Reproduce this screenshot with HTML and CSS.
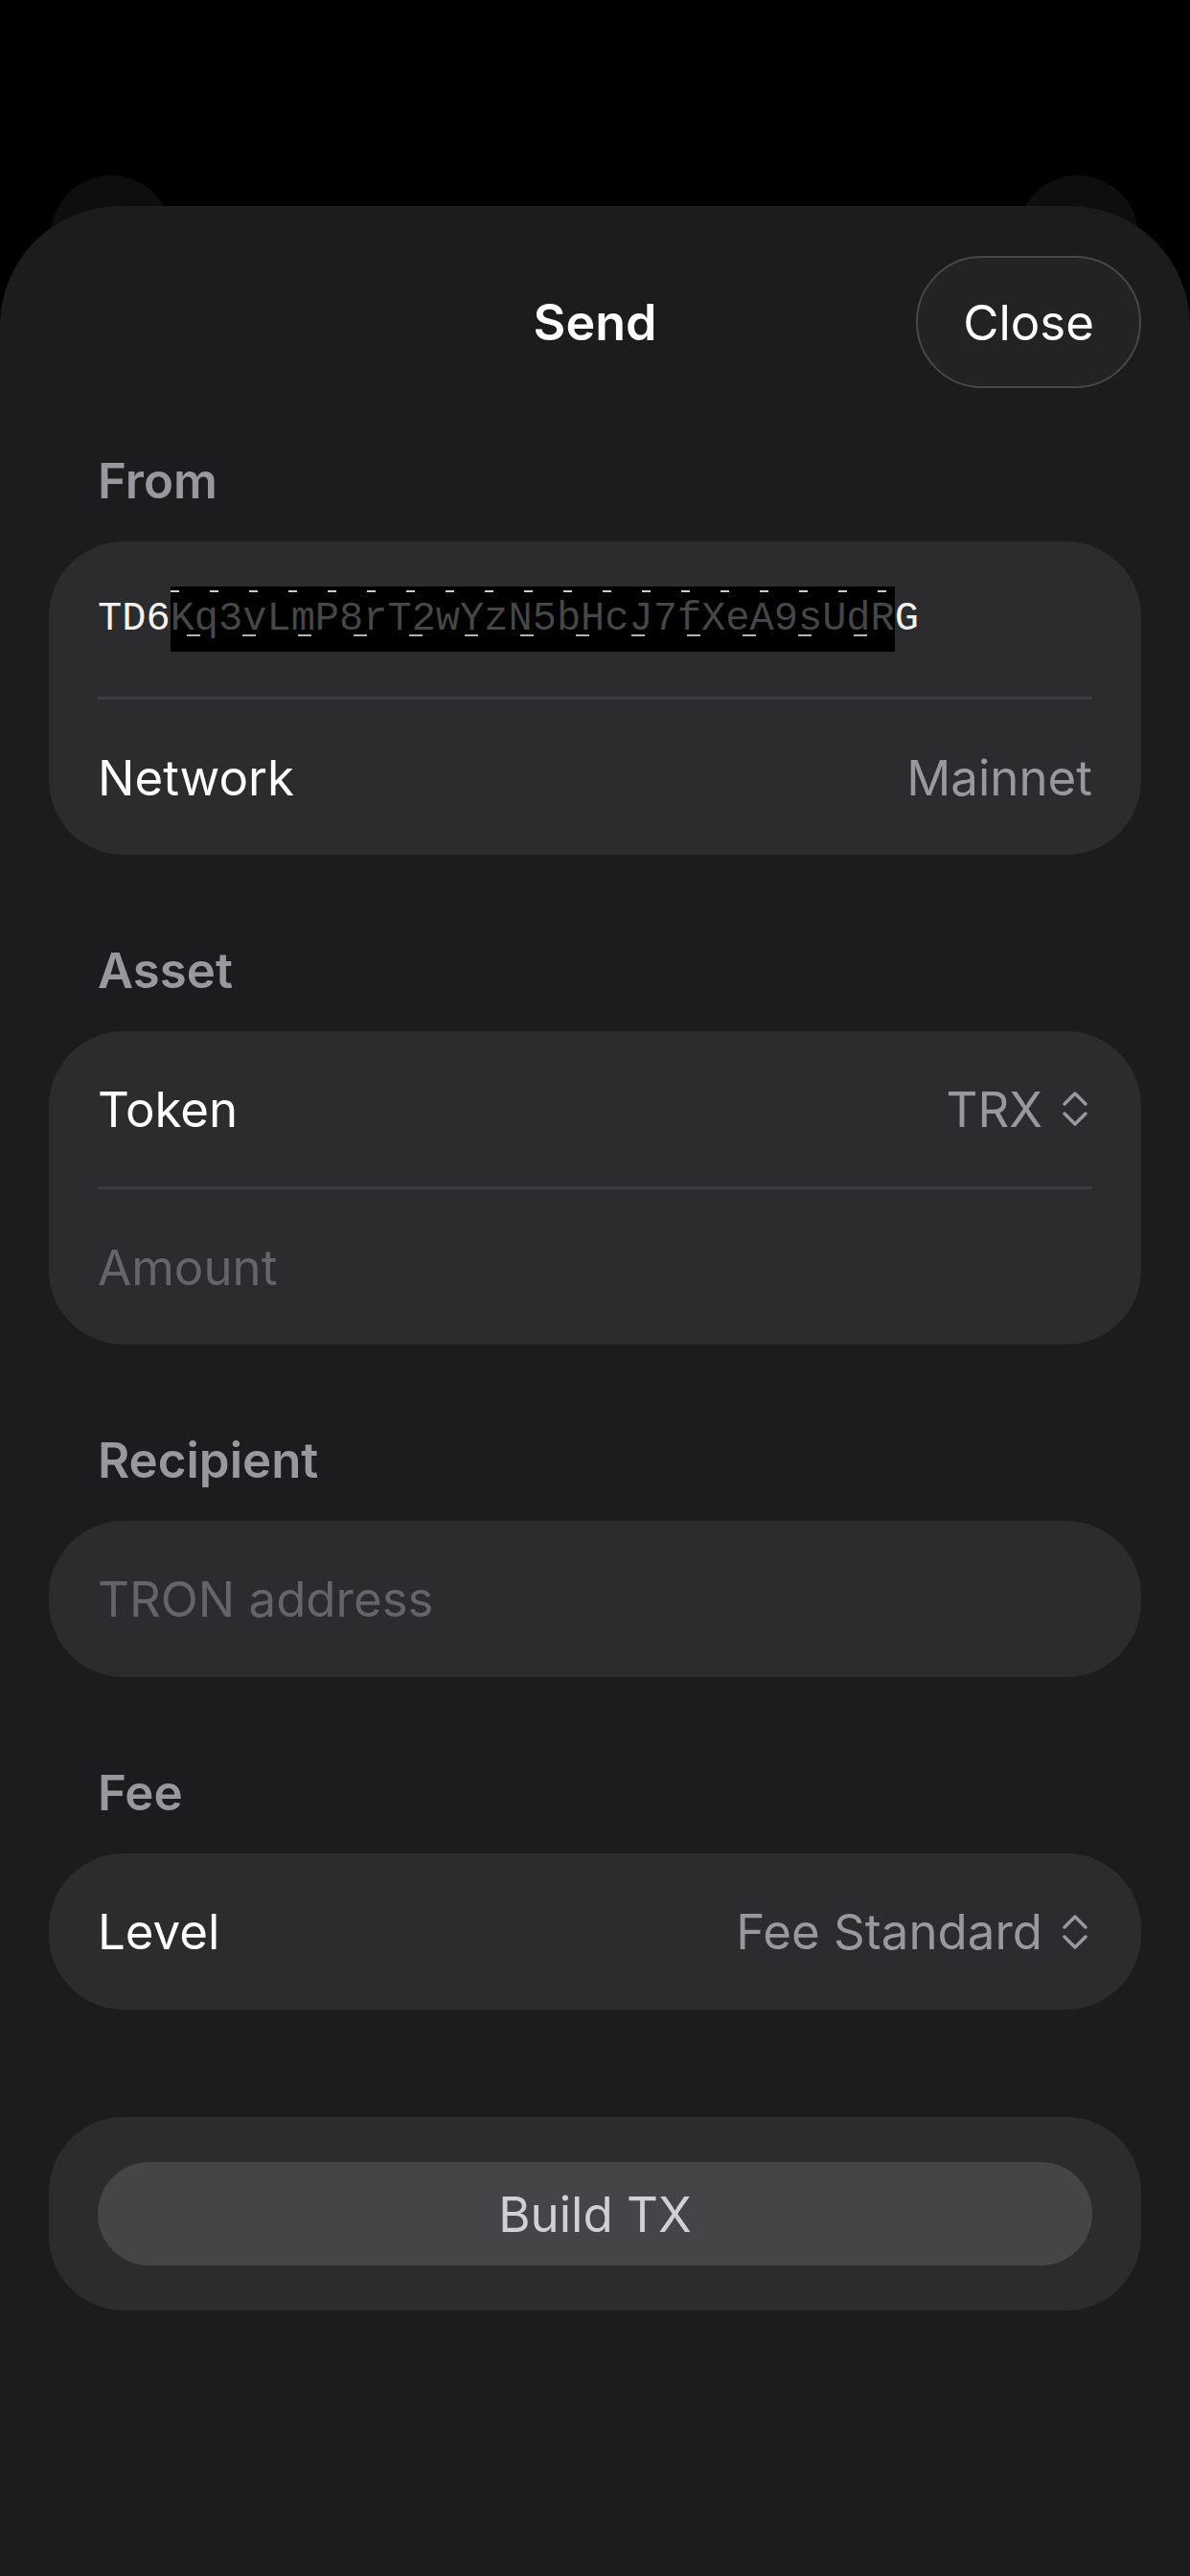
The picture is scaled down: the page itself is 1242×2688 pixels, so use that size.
FILE: index.html
```html
<!DOCTYPE html>
<html lang="en">
<head>
    <meta charset="UTF-8">
    <meta name="viewport" content="width=device-width, initial-scale=1.0">
    <title>Send</title>
    <link rel="stylesheet" href="styles.css">
</head>
<body>
    <!-- buttons of the page under the sheet -->
    <div class="peek peek-left"></div>
    <div class="peek peek-right"></div>

    <div class="sheet">
        <div class="top">
            <span></span>
            <h1 class="title">Send</h1>
            <button class="close">Close</button>
        </div>

        <div class="section">
            <p class="label">From</p>
            <div class="card">
                <div class="row">
                    <span class="address">TD6<span class="redact">Kq3vLmP8rT2wYzN5bHcJ7fXeA9sUdR</span>G</span>
                </div>
                <div class="row">
                    <span>Network</span>
                    <span class="value">Mainnet</span>
                </div>
            </div>
        </div>

        <div class="section">
            <p class="label">Asset</p>
            <div class="card">
                <div class="row">
                    <span>Token</span>
                    <span class="value">TRX
                        <svg class="updown" width="28" height="40" viewBox="0 0 28 40"><polyline points="3,15 14,4 25,15"/><polyline points="3,25 14,36 25,25"/></svg>
                    </span>
                </div>
                <div class="row">
                    <span class="placeholder">Amount</span>
                </div>
            </div>
        </div>

        <div class="section">
            <p class="label">Recipient</p>
            <div class="card">
                <div class="row single">
                    <span class="placeholder">TRON address</span>
                </div>
            </div>
        </div>

        <div class="section">
            <p class="label">Fee</p>
            <div class="card">
                <div class="row single">
                    <span>Level</span>
                    <span class="value">Fee Standard
                        <svg class="updown" width="28" height="40" viewBox="0 0 28 40"><polyline points="3,15 14,4 25,15"/><polyline points="3,25 14,36 25,25"/></svg>
                    </span>
                </div>
            </div>
        </div>

        <div class="card build-card">
            <button class="build">Build TX</button>
        </div>
    </div>
</body>
</html>
```

FILE: styles.css
```css
body {
    margin: 0;
    width: 1242px;
    height: 2688px;
    overflow: hidden;
    background-color: #000;
    font-family: Inter, "Noto Sans", sans-serif;
    color: #fff;
    position: relative;
}

.peek {
    position: absolute;
    top: 183px;
    width: 126px;
    height: 126px;
    border-radius: 50%;
    background-color: #0e0e0c;
}

.peek-left {
    left: 53px;
}

.peek-right {
    right: 54px;
}

.sheet {
    position: relative;
    z-index: 1;
    margin-top: 215px;
    min-height: 2473px;
    box-sizing: border-box;
    padding: 52px 51px 0;
    background-color: #1c1c1e;
    border-radius: 125px 125px 0 0;
}

/* title bar */
.top {
    display: grid;
    grid-template-columns: 1fr auto 1fr;
    align-items: center;
}

.title {
    margin: 0;
    font-size: 52px;
    font-weight: 600;
}

.close {
    justify-self: end;
    height: 138px;
    padding: 0 47px;
    border: 2px solid #48484b;
    border-radius: 69px;
    background-color: #232325;
    color: #fff;
    font-family: inherit;
    font-size: 51px;
}

/* sections */
.section {
    margin-top: 90px;
}

.top + .section {
    margin-top: 66px;
}

.label {
    margin: 0 0 33px 51px;
    font-size: 51px;
    line-height: 61px;
    font-weight: 600;
    color: #98989f;
}

.card {
    background-color: #2c2c2e;
    border-radius: 78px;
    padding: 0 51px;
}

.row {
    display: flex;
    align-items: center;
    justify-content: space-between;
    height: 162px;
    font-size: 51px;
}

.row + .row {
    border-top: 3px solid #3d3d41;
}

.row.single {
    height: 163px;
}

.value {
    display: flex;
    align-items: center;
    color: #98989f;
}

.placeholder {
    color: #656569;
}

.updown {
    margin: 0 4px 0 20px;
    fill: none;
    stroke: #98989f;
    stroke-width: 3.5;
    stroke-linecap: round;
    stroke-linejoin: round;
}

/* wallet address, middle part blacked out */
.address {
    font-family: "Liberation Mono", "DejaVu Sans Mono", monospace;
    font-size: 42px;
    color: #f2f2f2;
}

.redact {
    position: relative;
    display: inline-block;
    height: 68px;
    line-height: 68px;
    vertical-align: middle;
    background-color: #000;
    color: rgba(255, 255, 255, 0.28);
}

.redact::before,
.redact::after {
    content: "";
    position: absolute;
    left: 0;
    right: 0;
    height: 2px;
    background-image: repeating-linear-gradient(90deg, rgba(255, 255, 255, 0.8) 0 9px, transparent 9px 41px);
}

.redact::before {
    top: 4px;
}

.redact::after {
    bottom: 16px;
    background-image: repeating-linear-gradient(90deg, transparent 0 17px, rgba(255, 255, 255, 0.7) 17px 31px, transparent 31px 58px);
}

/* build button */
.build-card {
    margin-top: 112px;
    padding: 47px 51px;
}

.build {
    display: block;
    width: 100%;
    height: 108px;
    border: none;
    border-radius: 54px;
    background-color: #454548;
    color: #d1d1d5;
    font-family: inherit;
    font-size: 51px;
}
```
